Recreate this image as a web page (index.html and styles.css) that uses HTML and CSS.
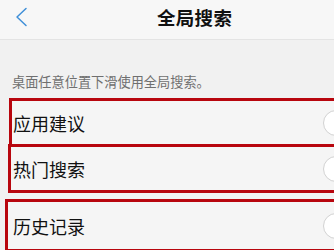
FILE: index.html
```html
<!DOCTYPE html>
<html lang="zh">
<head>
<meta charset="utf-8">
<link rel="stylesheet" href="styles.css">
</head>
<body>
<div class="page">
  <header class="topbar">
    <svg class="back" width="14" height="20" viewBox="0 0 14 20"><path d="M12 1.5 L3 10 L12 18.5" fill="none" stroke="#3f8fd8" stroke-width="1.5" stroke-linecap="round" stroke-linejoin="round"/></svg>
    <div class="title">全局搜索</div>
  </header>
  <p class="caption">桌面任意位置下滑使用全局搜索。</p>
  <div class="list">
    <div class="row row1"><span class="label">应用建议</span><span class="knob"></span></div>
    <div class="row row2"><span class="label">热门搜索</span><span class="knob"></span></div>
    <div class="row row3"><span class="label">历史记录</span><span class="knob"></span></div>
  </div>
</div>
</body>
</html>
```
FILE: styles.css
```css
html, body {
  margin: 0;
  padding: 0;
  background: #f1f1f1;
  overflow: hidden;
  font-family: "Noto Sans CJK SC", "Noto Sans", sans-serif;
}
.page {
  width: 334px;
  height: 250px;
  overflow: hidden;
}
.topbar {
  height: 39px;
  background: #f7f7f7;
  border-bottom: 1px solid #e4e4e4;
  display: flex;
  align-items: center;
}
.back {
  margin-left: 14px;
  margin-top: -6px;
}
.title {
  margin-left: 129px;
  margin-top: -6px;
  font-size: 18.5px;
  font-weight: bold;
  color: #111;
  letter-spacing: 0.3px;
}
.caption {
  margin: 0;
  padding: 34px 0 0 12px;
  height: 24px;
  font-size: 13.2px;
  line-height: 16px;
  color: #6f6f6f;
}
.list {
  display: flex;
  flex-direction: column;
}
.row {
  box-sizing: border-box;
  width: 360px;
  background: #f5f5f5;
  border: 3px solid #b8060e;
  display: flex;
  align-items: center;
  justify-content: space-between;
}
.row1 {
  margin-left: 9px;
  height: 49px;
}
.row2 {
  margin-left: 8px;
  margin-top: -3px;
  height: 49px;
}
.row3 {
  margin-left: 5px;
  margin-top: 6px;
  height: 53px;
}
.label {
  font-size: 18px;
  color: #111;
  line-height: 24px;
}
.row1 .label { margin-left: 1px; }
.row2 .label { margin-left: 2px; }
.row3 .label { margin-left: 5px; }
.knob {
  box-sizing: border-box;
  width: 26px;
  height: 26px;
  border-radius: 50%;
  background: #fff;
  border: 1.5px solid #d2d2d2;
}
.row1 .knob { margin-right: 17px; }
.row2 .knob { margin-right: 16px; }
.row3 .knob { margin-right: 13px; }
```
